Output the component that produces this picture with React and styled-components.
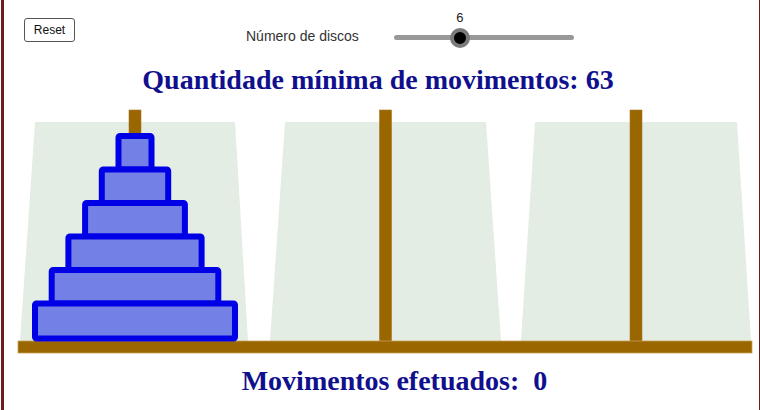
import React, { useState } from "react";
import styled, { createGlobalStyle } from "styled-components";

const Global = createGlobalStyle`
  html, body { margin: 0; padding: 0; background: #fff; }
  body { font-family: "Liberation Sans", Arial, sans-serif; }
`;

const Frame = styled.div`
  box-sizing: border-box;
  width: 759px;
  height: 410px;
  margin-left: 1px;
  border-left: 3px solid #6e1a1a;
  border-right: 1px solid #6e1a1a;
  background: #fff;
  display: flex;
  flex-direction: column;
  overflow: hidden;
`;

const TopBar = styled.div`
  height: 55px;
  box-sizing: border-box;
  padding: 18px 0 0 20px;
  display: flex;
  align-items: flex-start;
`;

const ResetButton = styled.button`
  box-sizing: border-box;
  width: 51px;
  height: 24px;
  padding: 0;
  border: 1px solid #555;
  border-radius: 3px;
  background: #fff;
  font-family: "Liberation Sans", Arial, sans-serif;
  font-size: 12px;
  color: #111;
  cursor: pointer;
`;

const SliderLabel = styled.span`
  margin-left: 171px;
  margin-top: 9px;
  font-size: 14px;
  line-height: 18px;
  color: #333;
`;

const SliderTrack = styled.div`
  position: relative;
  margin-left: 35px;
  margin-top: 17px;
  width: 180px;
  height: 5px;
  border-radius: 3px;
  background: #999;
`;

const Thumb = styled.div`
  position: absolute;
  top: 50%;
  width: 12px;
  height: 12px;
  margin: -10px 0 0 -10px;
  border-radius: 50%;
  background: #000;
  border: 4px solid #7a7a7a;
`;

const ThumbValue = styled.span`
  position: absolute;
  top: -25px;
  transform: translateX(-50%);
  font-size: 13px;
  line-height: 15px;
  color: #222;
`;

const Heading = styled.div`
  height: ${(p) => p.$h}px;
  box-sizing: border-box;
  padding-top: ${(p) => p.$pt}px;
  padding-left: ${(p) => (p.$shift > 0 ? p.$shift : 0)}px;
  padding-right: ${(p) => (p.$shift < 0 ? -p.$shift : 0)}px;
  text-align: center;
  font-family: "Liberation Serif", "Times New Roman", serif;
  font-weight: bold;
  font-size: 28px;
  line-height: 30px;
  color: #10108e;
  white-space: pre;
`;

const Board = styled.svg`
  display: block;
  width: 755px;
  height: 248px;
  flex: none;
`;

const pegs = [135, 385.5, 636];
const traps = [
  [35, 235, 20, 248],
  [285, 486, 270, 501],
  [535, 737, 521, 751],
];

export default function App() {
  const [n] = useState(6);
  const sliderPos = 66;
  const disks = Array.from({ length: n }, (_, i) => {
    const k = i + 1;
    const w = 39 + 33.4 * (k - 1);
    const top = 300.5 - (n - k) * 33.5;
    return { w, top, k };
  });
  return (
    <>
      <Global />
      <Frame>
        <TopBar>
          <ResetButton>Reset</ResetButton>
          <SliderLabel>Número de discos</SliderLabel>
          <SliderTrack>
            <Thumb style={{ left: sliderPos }} />
            <ThumbValue style={{ left: sliderPos }}>{n}</ThumbValue>
          </SliderTrack>
        </TopBar>
        <Heading $h={53} $pt={10} $shift={-7}>
          Quantidade mínima de movimentos: {Math.pow(2, n) - 1}
        </Heading>
        <Board viewBox="4 108 755 248">
          {traps.map(([a, b, c, d], i) => (
            <polygon
              key={i}
              points={`${a},122 ${b},122 ${d},341 ${c},341`}
              fill="#e4ede4"
            />
          ))}
          {pegs.map((x, i) => (
            <rect key={i} x={x - 6} y={110} width={12} height={232} fill="#996600" stroke="#a8782a" strokeWidth="0.6" />
          ))}
          <rect x={18} y={341} width={734} height={12} fill="#996600" stroke="#c8a050" strokeWidth="0.8" />
          {disks.map(({ w, top, k }) => (
            <rect
              key={k}
              x={135 - w / 2 + 3}
              y={top + 3}
              width={w - 6}
              height={k === n ? 35 : 33.5}
              rx={1.5}
              fill="#7381e6"
              stroke="#0000e6"
              strokeWidth="6"
            />
          ))}
        </Board>
        <Heading $h={54} $pt={10} $shift={26}>
          {"Movimentos efetuados:  0"}
        </Heading>
      </Frame>
    </>
  );
}
